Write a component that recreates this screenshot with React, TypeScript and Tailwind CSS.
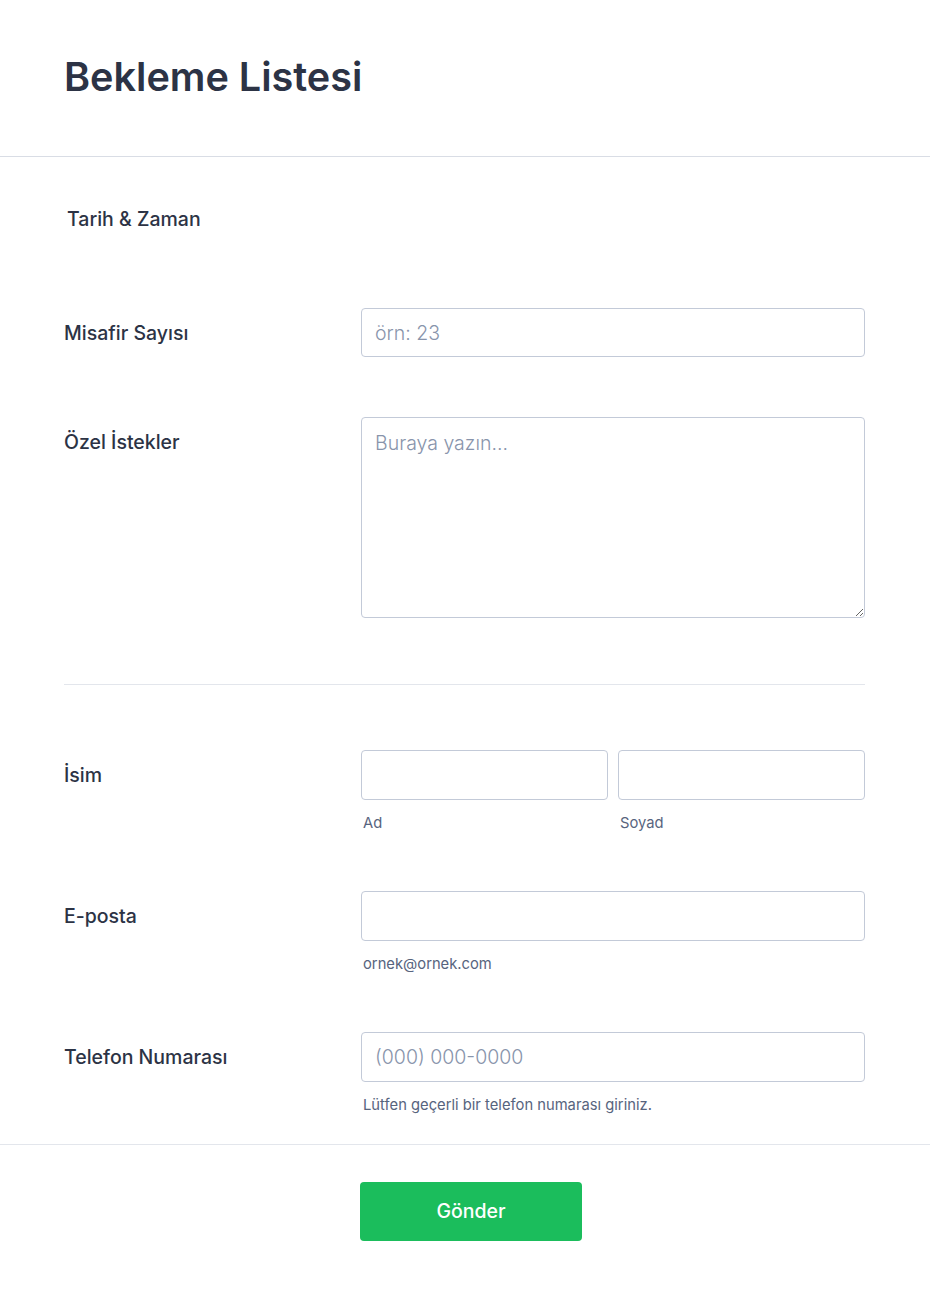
import React from "react"

const fieldCls =
  "block w-full rounded-[4px] border border-[#c3cad8] bg-white px-[13px] text-[19.5px] font-light text-[#2c3345] placeholder:text-[#8894ab] outline-none [font-family:Inter,'Noto_Sans',sans-serif]"

function Row({
  label,
  children,
  className = "",
}: {
  label: string
  children: React.ReactNode
  className?: string
}) {
  return (
    <div className={"flex " + className}>
      <div className="w-[297px] shrink-0 pt-[13px] text-[19.5px] leading-6 font-medium text-[#2c3345]">
        {label}
      </div>
      <div className="flex-1">{children}</div>
    </div>
  )
}

function SubLabel({ text }: { text: string }) {
  return (
    <div className="mt-[14px] pl-[2px] text-[14.75px] leading-[18px] text-[#57647e]">
      {text}
    </div>
  )
}

export default function App() {
  return (
    <div className="min-h-[1291px] w-full bg-white [font-family:Inter,'Noto_Sans',sans-serif]">
      <div className="border-b border-[#d9dde5] px-16 pt-[53px] pb-[55px]">
        <h1 className="text-[39.6px] leading-[48px] font-semibold text-[#2c3345]">
          Bekleme Listesi
        </h1>
      </div>

      <div className="pl-16 pr-[65px]">
        <div className="mt-[50px] pl-[3px] text-[19.5px] leading-6 font-medium text-[#2c3345]">
          Tarih &amp; Zaman
        </div>

        <Row label="Misafir Sayısı" className="mt-[77px]">
          <input className={fieldCls + " h-[49px]"} placeholder="örn: 23" />
        </Row>

        <Row label="Özel İstekler" className="mt-[60px]">
          <textarea
            className={fieldCls + " h-[201px] py-[13px] leading-6"}
            placeholder="Buraya yazın..."
          />
        </Row>

        <div className="mt-[66px] border-t border-[#e3e6ec]" />

        <Row label="İsim" className="mt-[65px]">
          <div className="flex gap-[10px]">
            <div className="flex-1">
              <input className={fieldCls + " h-[50px]"} />
              <SubLabel text="Ad" />
            </div>
            <div className="flex-1">
              <input className={fieldCls + " h-[50px]"} />
              <SubLabel text="Soyad" />
            </div>
          </div>
        </Row>

        <Row label="E-posta" className="mt-[59px]">
          <input className={fieldCls + " h-[50px]"} />
          <SubLabel text="ornek@ornek.com" />
        </Row>

        <Row label="Telefon Numarası" className="mt-[59px]">
          <input
            className={fieldCls + " h-[50px]"}
            placeholder="(000) 000-0000"
          />
          <SubLabel text="Lütfen geçerli bir telefon numarası giriniz." />
        </Row>
      </div>

      <div className="mt-[30px] border-t border-[#e3e6ec] pt-[37px]">
        <div className="pl-[360px]">
          <button className="h-[59px] w-[222px] rounded-[4px] bg-[#1bbd5c] text-[19.5px] font-medium text-white">
            Gönder
          </button>
        </div>
      </div>
    </div>
  )
}
